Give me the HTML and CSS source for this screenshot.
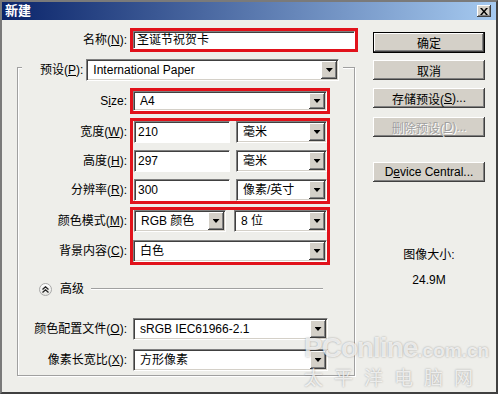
FILE: index.html
```html
<!DOCTYPE html>
<html>
<head>
  <title>新建</title>
  <link rel="stylesheet" href="styles.css">
</head>
<body>

  <div class="window">
    <div class="titlebar">
      <span class="title">新建</span>
      <span class="close">
        <svg width="8" height="7" viewBox="0 0 8 7"><path d="M0 0h2l2 2.5L6 0h2L5 3.5 8 7H6L4 4.5 2 7H0l3-3.5z" fill="#000"/></svg>
      </span>
    </div>

    <div class="dialog">
      <div class="form">
        <div class="name-row">
          <span class="lbl name-lbl">名称(<u>N</u>):</span>
          <div class="mark">
            <div class="field name-field">圣诞节祝贺卡</div>
          </div>
        </div>

        <div class="group">
          <div class="group-head">
            <span class="lbl">预设(<u>P</u>):</span>
            <div class="combo preset"><span class="val">International Paper</span><span class="arrow"></span></div>
          </div>

          <div class="grow size-row">
            <span class="lbl">S<u>i</u>ze:</span>
            <div class="mark">
              <div class="combo short wide"><span class="val">A4</span><span class="arrow"></span></div>
            </div>
          </div>

          <div class="block whr">
            <div class="labels">
              <span class="lbl">宽度(<u>W</u>):</span>
              <span class="lbl">高度(<u>H</u>):</span>
              <span class="lbl">分辨率(<u>R</u>):</span>
            </div>
            <div class="mark stack">
              <div class="pair">
                <div class="field num">210</div>
                <div class="combo unit"><span class="val">毫米</span><span class="arrow"></span></div>
              </div>
              <div class="pair">
                <div class="field num">297</div>
                <div class="combo unit"><span class="val">毫米</span><span class="arrow"></span></div>
              </div>
              <div class="pair">
                <div class="field num">300</div>
                <div class="combo unit"><span class="val">像素/英寸</span><span class="arrow"></span></div>
              </div>
            </div>
          </div>

          <div class="block color">
            <div class="labels">
              <span class="lbl">颜色模式(<u>M</u>):</span>
              <span class="lbl">背景内容(<u>C</u>):</span>
            </div>
            <div class="mark stack">
              <div class="pair">
                <div class="combo mode"><span class="val">RGB 颜色</span><span class="arrow"></span></div>
                <div class="combo bits"><span class="val">8 位</span><span class="arrow"></span></div>
              </div>
              <div class="pair">
                <div class="combo wide"><span class="val">白色</span><span class="arrow"></span></div>
              </div>
            </div>
          </div>

          <div class="advanced">
            <span class="toggle">
              <svg width="7" height="7" viewBox="0 0 7 7"><path d="M0.5 3.5L3.5 0.8 6.5 3.5M0.5 6.5L3.5 3.8 6.5 6.5" fill="none" stroke="#222" stroke-width="1.3"/></svg>
            </span>
            <span class="adv-text">高级</span>
            <span class="adv-line"></span>
          </div>

          <div class="grow profile-row">
            <span class="lbl">颜色配置文件(<u>O</u>):</span>
            <div class="combo plain"><span class="val">sRGB IEC61966-2.1</span><span class="arrow"></span></div>
          </div>
          <div class="grow aspect-row">
            <span class="lbl">像素长宽比(<u>X</u>):</span>
            <div class="combo plain"><span class="val">方形像素</span><span class="arrow"></span></div>
          </div>
        </div>
      </div>

      <div class="side">
        <div class="btn default">确定</div>
        <div class="btn cancel">取消</div>
        <div class="btn save">存储预设(<u>S</u>)...</div>
        <div class="btn remove disabled">删除预设(<u>D</u>)...</div>
        <div class="btn device">D<u>e</u>vice Central...</div>
        <div class="info">图像大小:</div>
        <div class="info size">24.9M</div>
      </div>
    </div>

    <div class="watermark">
      <div class="wm-top">PConline<span class="wm-small">.com.cn</span></div>
      <div class="wm-cn">太平洋电脑网</div>
    </div>
  </div>

</body>
</html>
```

FILE: styles.css
```css
* {
  box-sizing: border-box;
}

body {
  margin: 0;
  font-family: "Liberation Sans", "Noto Sans CJK SC", sans-serif;
  font-size: 12px;
  color: #000;
}

u {
  text-decoration: underline;
}

.window {
  position: relative;
  width: 498px;
  height: 394px;
  background: #eeeeea;
  border: 2px solid;
  border-color: #7a7a7a #404040 #404040 #7a7a7a;
  overflow: hidden;
}

.titlebar {
  height: 18px;
  display: flex;
  align-items: center;
  justify-content: space-between;
  padding: 0 5px 0 3px;
  background: linear-gradient(to right, #0a246a, #a6caf0);
}

.title {
  color: #fff;
  font-weight: bold;
  font-size: 13px;
  line-height: 18px;
}

.close {
  width: 14px;
  height: 12px;
  display: flex;
  align-items: center;
  justify-content: center;
  background: #d4d0c8;
  box-shadow: inset -1px -1px #404040, inset 1px 1px #fff, inset -2px -2px #808080;
}

.dialog {
  display: flex;
}

.form {
  width: 371px;
  padding-top: 8px;
}

.lbl {
  text-align: right;
  white-space: nowrap;
  line-height: 22px;
}

.name-row {
  display: flex;
  align-items: center;
}

.name-lbl {
  width: 125px;
}

.mark {
  border: 3px solid #e1121b;
  margin-left: 3px;
}

.field {
  background: #fff;
  border: 1px solid;
  border-color: #808080 #fff #fff #808080;
  box-shadow: inset 1px 1px #404040;
  padding-left: 3px;
  line-height: 20px;
  height: 22px;
}

.name-field {
  width: 222px;
  height: 18px;
  line-height: 16px;
}

.combo {
  display: flex;
  height: 22px;
  background: #fff;
  border: 1px solid;
  border-color: #808080 #fff #fff #808080;
  box-shadow: inset 1px 1px #404040, inset -1px -1px #d4d0c8;
  padding: 1px;
}

.combo .val {
  flex: 1;
  padding-left: 5px;
  line-height: 18px;
  white-space: nowrap;
  overflow: hidden;
}

.combo .arrow {
  width: 16px;
  display: flex;
  align-items: center;
  justify-content: center;
  background: #d4d0c8;
  box-shadow: inset -1px -1px #404040, inset 1px 1px #fff, inset -2px -2px #808080;
}

.combo .arrow::after {
  content: "";
  width: 7px;
  height: 4px;
  background: #000;
  clip-path: polygon(0 0, 100% 0, 50% 100%);
}

.combo.short {
  height: 20px;
}

.combo.short .val {
  line-height: 16px;
}

.group {
  margin: 15px 0 0 15px;
  width: 338px;
  border: 1px solid #a0a0a0;
  box-shadow: inset 1px 1px #fff, 1px 1px #fff;
  padding-bottom: 4px;
}

.group-head {
  display: flex;
  align-items: center;
  width: fit-content;
  margin: -9px 0 0 4px;
  padding: 0 4px 0 18px;
  background: #eeeeea;
}

.preset {
  width: 253px;
  margin-left: 3px;
}

.grow {
  display: flex;
  align-items: center;
}

.grow > .lbl,
.labels {
  width: 109px;
}

.size-row {
  margin-top: 7px;
}

.wide {
  width: 194px;
}

.block {
  display: flex;
}

.labels {
  display: flex;
  flex-direction: column;
  padding-top: 3px;
}

.labels .lbl {
  height: 22px;
}

.stack {
  display: flex;
  flex-direction: column;
}

.whr {
  margin-top: 4px;
}

.whr .labels,
.whr .stack {
  gap: 7px;
}

.color {
  margin-top: 3px;
}

.color .labels,
.color .stack {
  gap: 8px;
}

.pair {
  display: flex;
  width: 194px;
}

.num {
  width: 96px;
  margin-left: 1px;
}

.unit {
  width: 91px;
  margin-left: 6px;
}

.mode {
  width: 92px;
  margin-left: 1px;
}

.bits {
  width: 93px;
  margin-left: 8px;
}

.advanced {
  display: flex;
  align-items: center;
  height: 14px;
  margin-top: 17px;
  padding-left: 21px;
}

.toggle {
  width: 13px;
  height: 13px;
  border-radius: 50%;
  border: 1px solid #a8a8a8;
  background: linear-gradient(#ffffff, #e4e4e0);
  display: flex;
  align-items: center;
  justify-content: center;
}

.adv-text {
  margin-left: 8px;
  line-height: 14px;
}

.adv-line {
  width: 232px;
  height: 2px;
  margin-left: 7px;
  border-top: 1px solid #a0a0a0;
  border-bottom: 1px solid #fff;
}

.profile-row {
  margin-top: 22px;
}

.aspect-row {
  margin-top: 9px;
}

.plain {
  width: 195px;
  margin-left: 6px;
}

.side {
  width: 112px;
  padding-top: 12px;
  display: flex;
  flex-direction: column;
}

.btn {
  height: 20px;
  display: flex;
  align-items: center;
  justify-content: center;
  background: #d4d0c8;
  box-shadow: inset -1px -1px #404040, inset 1px 1px #fff, inset -2px -2px #808080;
  white-space: nowrap;
}

.btn.default {
  height: 21px;
  border: 1px solid #000;
}

.cancel {
  margin-top: 7px;
}

.save {
  margin-top: 8px;
}

.remove {
  margin-top: 9px;
}

.disabled {
  color: #a0a0a0;
  text-shadow: 1px 1px #fff;
}

.device {
  margin-top: 25px;
}

.info {
  margin-top: 66px;
  text-align: center;
  line-height: 14px;
}

.info.size {
  margin-top: 11px;
}

.watermark {
  position: absolute;
  left: 302px;
  top: 331px;
  width: 185px;
  color: rgba(255, 255, 255, 0.75);
  text-shadow: 0 0 2px rgba(0, 0, 0, 0.35);
  pointer-events: none;
  white-space: nowrap;
}

.wm-top {
  font-family: "Liberation Sans", sans-serif;
  font-weight: bold;
  font-size: 28px;
  letter-spacing: -1px;
  line-height: 30px;
}

.wm-small {
  font-size: 19px;
  letter-spacing: 0;
}

.wm-cn {
  font-family: "Noto Sans CJK SC", sans-serif;
  font-size: 19px;
  letter-spacing: 11px;
  line-height: 22px;
}
```
